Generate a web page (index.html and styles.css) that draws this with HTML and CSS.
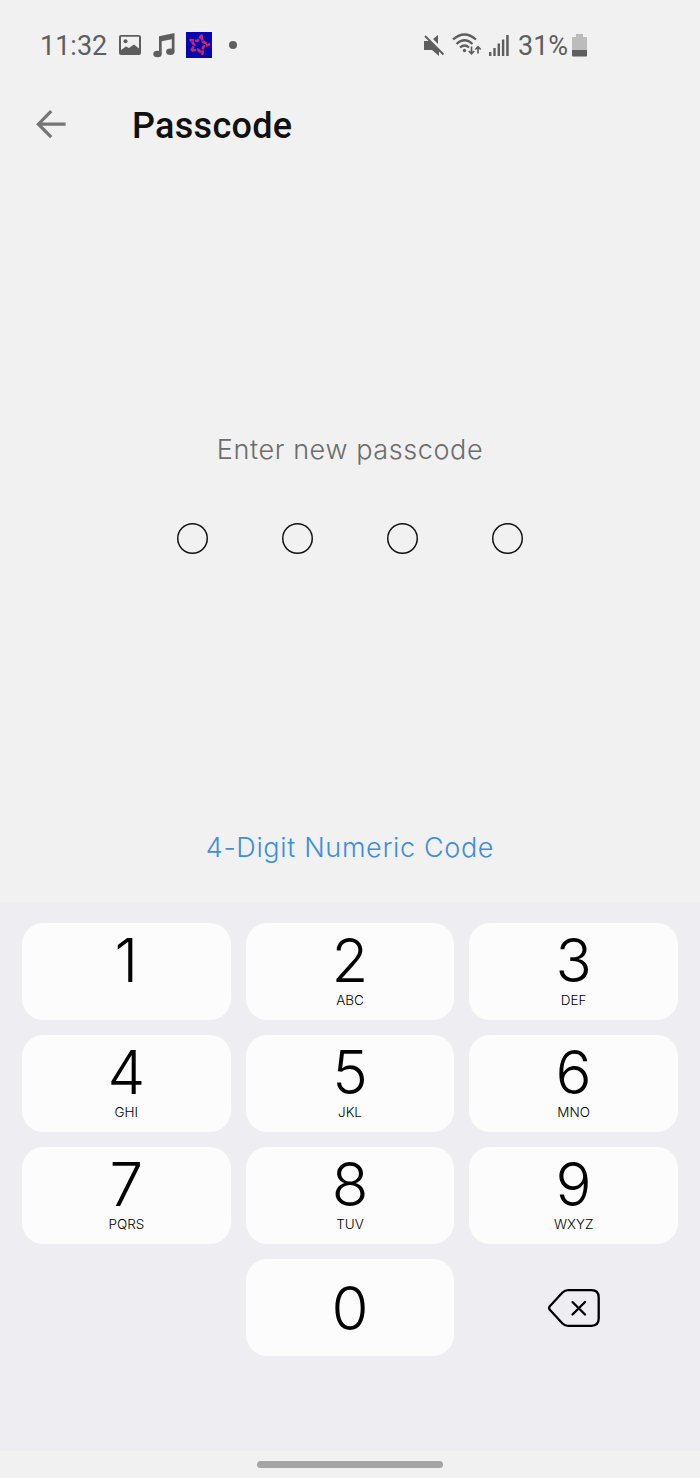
FILE: index.html
```html
<!DOCTYPE html>
<html lang="en">

<head>
    <meta charset="UTF-8">
    <meta name="viewport" content="width=device-width, initial-scale=1.0">
    <title>Passcode</title>
    <link rel="stylesheet" href="styles.css">
</head>

<body>
    <div class="status-bar">
        <div class="status-left">
            <span class="time">11:32</span>
            <svg class="icon-image" width="22" height="20" viewBox="0 0 22 20">
                <path fill="currentColor" fill-rule="evenodd" d="M2 0h18a2 2 0 0 1 2 2v16a2 2 0 0 1-2 2H2a2 2 0 0 1-2-2V2a2 2 0 0 1 2-2zM2 1.8V15l5-3.500 3 1.500 5-3.500 5 4V1.800z" />
                <circle cx="6.500" cy="6.300" r="2" fill="currentColor" />
            </svg>
            <svg class="icon-music" width="22" height="25" viewBox="0 0 22 25">
                <path fill="currentColor" d="M6 3.200 21.500 0v18.500h-2.700V6.200L8.700 8.200v12.500H6z" />
                <ellipse cx="4.500" cy="21" rx="4.200" ry="3.300" fill="currentColor" />
                <ellipse cx="17.300" cy="18.700" rx="4.200" ry="3.300" fill="currentColor" />
            </svg>
            <svg class="icon-app" width="26" height="26" viewBox="0 0 26 26">
                <rect width="26" height="26" fill="#0806ad" />
                <path fill="none" stroke="#c52969" stroke-width="2.500" stroke-dasharray="5 .8" stroke-linejoin="round" d="M15.500 3.500 16.500 9.500 23 12.500 17 15 16.500 22 12 17.500 5 19 8.500 13 4.500 8 11.500 9z" />
            </svg>
            <span class="dot"></span>
        </div>
        <div class="status-right">
            <svg class="icon-mute" width="22" height="23" viewBox="0 0 22 23">
                <path fill="currentColor" d="M1 7h5.500L16 16.500V22l-7-6H1zM10 5 15 1v9z" />
                <path stroke="currentColor" stroke-width="2" d="M2 2 20.500 20.500" />
            </svg>
            <svg class="icon-wifi" width="30" height="24" viewBox="0 0 30 24">
                <g fill="none" stroke="currentColor" stroke-width="2.200">
                    <path d="M1 6.500Q12.500-3.500 24 6.500" />
                    <path d="M4.500 11Q12.500 3.500 20.500 11" />
                    <path d="M8 14.500Q12.500 10.500 17 14.500" />
                    <path stroke-width="1.700" d="M19.500 13.500v7M16.800 18l2.700 2.800 2.700-2.800M26 20.500v-6.500M23.300 16.500 26 13.700l2.700 2.800" />
                </g>
                <circle cx="12.500" cy="17.500" r="1.700" fill="currentColor" />
            </svg>
            <svg class="icon-signal" width="20" height="21" viewBox="0 0 20 21">
                <path fill="currentColor" d="M0 17h2.400v4H0zM4.300 13h2.400v8H4.300zM8.600 8.500H11V21H8.600zM12.900 4.500h2.400V21h-2.400zM17.200 0h2.500v21h-2.500z" />
            </svg>
            <span class="battery-level">31%</span>
            <svg class="icon-battery" width="15" height="23" viewBox="0 0 15 23">
                <path fill="#bcbcbc" d="M4 0h7v3h3a1 1 0 0 1 1 1v12H0V4a1 1 0 0 1 1-1h3z" />
                <path fill="currentColor" d="M0 16h15v5.500a1 1 0 0 1-1 1H1a1 1 0 0 1-1-1z" />
            </svg>
        </div>
    </div>

    <header class="app-bar">
        <button class="back" aria-label="Back">
            <svg width="30" height="30" viewBox="0 0 30 30">
                <path fill="none" stroke="currentColor" stroke-width="3.200" d="M15.200 1.200 2.400 14.200 15.200 27.200M2.400 14.200h27.200" />
            </svg>
        </button>
        <h1>Passcode</h1>
    </header>

    <main>
        <p class="prompt">Enter new passcode</p>
        <div class="passcode">
            <span></span>
            <span></span>
            <span></span>
            <span></span>
        </div>
        <button class="code-type">4-Digit Numeric Code</button>
    </main>

    <div class="keypad">
        <button class="key">1</button>
        <button class="key">2<small>ABC</small></button>
        <button class="key">3<small>DEF</small></button>
        <button class="key">4<small>GHI</small></button>
        <button class="key">5<small>JKL</small></button>
        <button class="key">6<small>MNO</small></button>
        <button class="key">7<small>PQRS</small></button>
        <button class="key">8<small>TUV</small></button>
        <button class="key">9<small>WXYZ</small></button>
        <button class="key zero">0</button>
        <button class="delete" aria-label="Delete">
            <svg width="52" height="38" viewBox="0 0 52 38">
                <g fill="none" stroke="currentColor" stroke-width="2.300" stroke-linecap="round" stroke-linejoin="round">
                    <path d="M20 1.200H43.500Q50.700 1.200 50.700 8.400V29.600Q50.700 36.800 43.500 36.800H20Q17 36.800 14.500 34.500L1.800 20.800Q.5 19 1.800 17.200L14.500 3.500Q17 1.200 20 1.200z" />
                    <path d="M24.500 13 37 25.500M37 13 24.500 25.500" />
                </g>
            </svg>
        </button>
    </div>

    <div class="nav-bar"><span class="handle"></span></div>
</body>

</html>
```
FILE: styles.css
```css
:root {
    --bg: #f1f1f1;
    --keypad-bg: #eeedf2;
    --key-bg: #fcfcfc;
    --status: #5e5e5e;
    --blue: #3e8edb;
}

* {
    box-sizing: border-box;
}

body {
    margin: 0;
    height: 1478px;
    display: flex;
    flex-direction: column;
    background-color: var(--bg);
    font-family: "Inter", "Liberation Sans", sans-serif;
}

button {
    border: 0;
    padding: 0;
    background-color: transparent;
    font-family: inherit;
}

svg {
    display: block;
    flex: none;
}

.status-bar {
    height: 90px;
    padding: 0 113px 0 40px;
    display: flex;
    justify-content: space-between;
    align-items: center;
    color: var(--status);
    font-family: "Roboto", sans-serif;
    font-size: 27px;
    line-height: 32px;
}

.status-left,
.status-right {
    display: flex;
    align-items: center;
}

.time {
    width: 79px;
    padding-top: 2px;
}

.icon-music {
    margin-left: 12px;
}

.icon-app {
    margin-left: 11px;
}

.dot {
    width: 8px;
    height: 8px;
    margin-left: 17px;
    border-radius: 50%;
    background-color: currentColor;
}

.icon-wifi {
    margin-left: 7px;
}

.icon-signal {
    margin-left: 7px;
}

.battery-level {
    width: 54px;
    margin-left: 9px;
    padding-top: 2px;
}

.app-bar {
    height: 70px;
    padding-left: 36px;
    display: flex;
    align-items: center;
}

.back {
    width: 96px;
    color: #757575;
}

.app-bar h1 {
    margin: 0;
    padding-top: 2px;
    color: #111;
    font-family: "Roboto", sans-serif;
    font-size: 36px;
    font-weight: 500;
    line-height: 42px;
    letter-spacing: 0.3px;
}

main {
    height: 742px;
    padding-top: 273px;
    display: flex;
    flex-direction: column;
    align-items: center;
}

.prompt {
    margin: 0;
    color: #6c6c6c;
    font-size: 27px;
    font-weight: 300;
    line-height: 34px;
    letter-spacing: 0.6px;
}

.passcode {
    margin-top: 56px;
    display: flex;
    gap: 74px;
}

.passcode span {
    width: 31px;
    height: 31px;
    border-radius: 50%;
    box-shadow: inset 0 0 0 1.5px #111;
}

.code-type {
    margin-top: 277px;
    color: var(--blue);
    font-size: 27px;
    font-weight: 300;
    line-height: 34px;
    letter-spacing: 0.65px;
}

.keypad {
    height: 549px;
    padding: 21px 22px 0;
    display: grid;
    grid-template-columns: repeat(3, 1fr);
    grid-auto-rows: 97px;
    align-content: start;
    gap: 15px;
    background-color: var(--keypad-bg);
}

.key {
    display: flex;
    flex-direction: column;
    align-items: center;
    padding-top: 7px;
    border-radius: 21px;
    background-color: var(--key-bg);
    color: #000;
    font-size: 60px;
    font-weight: 300;
    line-height: 60px;
}

.key small {
    margin-top: 2px;
    font-size: 13.5px;
    line-height: 17px;
}

.zero {
    grid-column: 2;
    padding-top: 19px;
}

.delete {
    display: flex;
    align-items: center;
    justify-content: center;
    color: #000;
}

.nav-bar {
    height: 27px;
    padding-top: 10px;
}

.handle {
    display: block;
    width: 186px;
    height: 7px;
    margin: 0 auto;
    border-radius: 4px;
    background-color: #a5a5a5;
}
```
